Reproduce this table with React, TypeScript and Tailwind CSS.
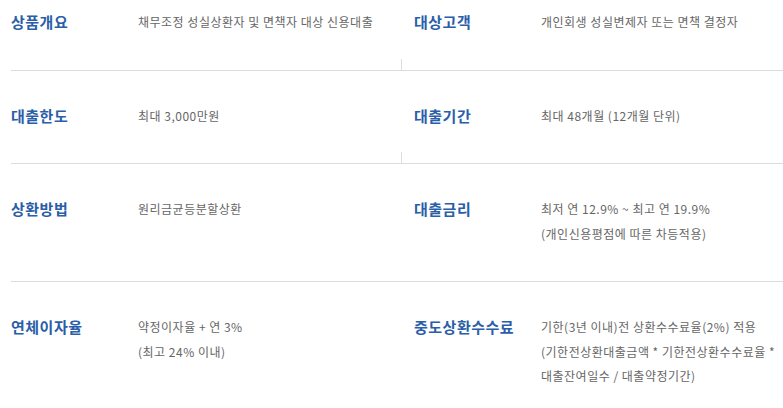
const rows = [
  {
    left: { title: "상품개요", lines: ["채무조정 성실상환자 및 면책자 대상 신용대출"] },
    right: { title: "대상고객", lines: ["개인회생 성실변제자 또는 면책 결정자"] },
    tick: true,
    first: true,
  },
  {
    left: { title: "대출한도", lines: ["최대 3,000만원"] },
    right: { title: "대출기간", lines: ["최대 48개월 (12개월 단위)"] },
    tick: true,
  },
  {
    left: { title: "상환방법", lines: ["원리금균등분할상환"] },
    right: {
      title: "대출금리",
      lines: ["최저 연 12.9% ~ 최고 연 19.9%", "(개인신용평점에 따른 차등적용)"],
    },
  },
  {
    left: { title: "연체이자율", lines: ["약정이자율 + 연 3%", "(최고 24% 이내)"] },
    right: {
      title: "중도상환수수료",
      lines: [
        "기한(3년 이내)전 상환수수료율(2%) 적용",
        "(기한전상환대출금액 * 기한전상환수수료율 *",
        "대출잔여일수 / 대출약정기간)",
      ],
    },
    last: true,
  },
];

function Cell({ title, lines }: { title: string; lines: string[] }) {
  return (
    <div className="flex items-start">
      <div className="w-[127px] shrink-0 text-[15px] leading-[24px] font-bold tracking-[0.5px] text-[#2a5ea8]">
        {title}
      </div>
      <div className="text-[12px] leading-[24.5px] tracking-[0.5px] text-[#666666] whitespace-nowrap">
        {lines.map((l) => (
          <p key={l}>{l}</p>
        ))}
      </div>
    </div>
  );
}

export default function App() {
  return (
    <div
      className="w-[783px] h-[408px] overflow-hidden bg-white pl-[11px]"
      style={{ fontFamily: '"Noto Sans CJK KR", "Noto Sans", sans-serif' }}
    >
      {rows.map((row, i) => (
        <div
          key={i}
          className={`relative flex ${row.last ? "" : "border-b border-[#dcdcdc]"} ${
            row.first ? "pt-[10px] pb-[35px]" : "pt-[33px] pb-[35px]"
          }`}
        >
          <div className="w-[390px] shrink-0">
            <Cell {...row.left} />
          </div>
          <div className="flex-1 pl-[13px]">
            <Cell {...row.right} />
          </div>
          {row.tick && (
            <span className="absolute left-[390px] bottom-0 h-[11px] w-px bg-[#dcdcdc]" />
          )}
        </div>
      ))}
    </div>
  );
}
